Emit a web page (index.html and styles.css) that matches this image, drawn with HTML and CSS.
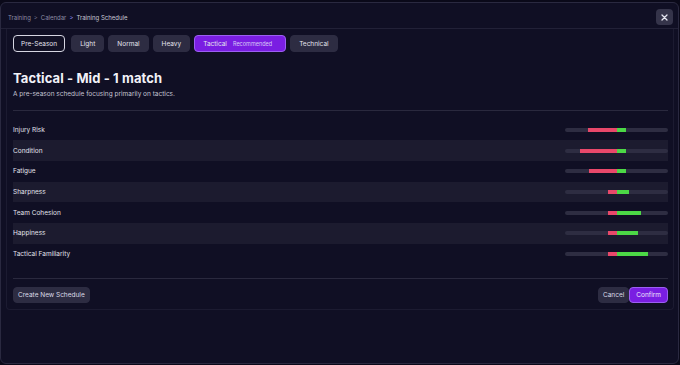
FILE: index.html
```html
<!DOCTYPE html>
<html lang="en">
<head>
  <meta charset="UTF-8">
  <title>Training Schedule</title>
  <link rel="stylesheet" href="styles.css">
</head>
<body>
  <div class="modal">
    <div class="header">
      <div class="crumbs">
        <span>Training</span><span class="sep">&gt;</span><span>Calendar</span><span class="sep last">&gt;</span><span class="current">Training Schedule</span>
      </div>
      <button class="close">
        <svg width="7" height="7" viewBox="0 0 7 7"><path d="M1 1L6 6M6 1L1 6" stroke="#e6e6f0" stroke-width="1.3" stroke-linecap="round"/></svg>
      </button>
    </div>

    <div class="panel">
      <div class="tabs">
        <button class="tab selected">Pre-Season</button>
        <button class="tab">Light</button>
        <button class="tab">Normal</button>
        <button class="tab">Heavy</button>
        <button class="tab recommended">Tactical <span class="tag">Recommended</span></button>
        <button class="tab">Technical</button>
      </div>

      <h1>Tactical - Mid - 1 match</h1>
      <p class="desc">A pre-season schedule focusing primarily on tactics.</p>

      <div class="rows">
        <div class="row"><span>Injury Risk</span><div class="track"><span class="neg" style="margin-left:23px;width:29px"></span><span class="pos" style="width:9px"></span></div></div>
        <div class="row"><span>Condition</span><div class="track"><span class="neg" style="margin-left:15px;width:37px"></span><span class="pos" style="width:9px"></span></div></div>
        <div class="row"><span>Fatigue</span><div class="track"><span class="neg" style="margin-left:24px;width:28px"></span><span class="pos" style="width:9px"></span></div></div>
        <div class="row"><span>Sharpness</span><div class="track"><span class="neg" style="margin-left:43px;width:9px"></span><span class="pos" style="width:12px"></span></div></div>
        <div class="row"><span>Team Cohesion</span><div class="track"><span class="neg" style="margin-left:43px;width:9px"></span><span class="pos" style="width:24px"></span></div></div>
        <div class="row"><span>Happiness</span><div class="track"><span class="neg" style="margin-left:43px;width:9px"></span><span class="pos" style="width:21px"></span></div></div>
        <div class="row"><span>Tactical Familiarity</span><div class="track"><span class="neg" style="margin-left:43px;width:9px"></span><span class="pos" style="width:31px"></span></div></div>
      </div>

      <div class="footer">
        <button class="btn">Create New Schedule</button>
        <div class="actions">
          <button class="btn">Cancel</button>
          <button class="btn primary">Confirm</button>
        </div>
      </div>
    </div>
  </div>
</body>
</html>
```

FILE: styles.css
```css
* { box-sizing: border-box; }
body { margin: 0; background-color: #0a0919; font-family: Inter, "Noto Sans", sans-serif; color: #e8e8f0; }
button { font-family: inherit; cursor: pointer; }

.modal { margin: 2px 1px 0 0; height: 362px; background-color: #100f24; border: 1px solid #2a2940; border-radius: 6px; }

.header { height: 26px; padding: 3px 5px 0 7px; display: flex; align-items: center; justify-content: space-between; border-bottom: 1px solid #222137; }
.crumbs { font-size: 6px; color: #8e8da4; display: flex; align-items: center; gap: 3px; }
.crumbs .sep { color: #6f6e86; }
.crumbs .sep.last { color: #8c8cf0; }
.crumbs .current { color: #c8c8d6; }
.close { width: 17px; height: 16px; border: none; border-radius: 4px; background-color: #35344a; display: flex; align-items: center; justify-content: center; padding: 0; }

.panel { margin: 0 4px 0 5px; padding: 6px 5px 6px 6px; border: 1px solid #1c1b31; border-top: none; border-radius: 0 0 4px 4px; }

.tabs { display: flex; gap: 4px; }
.tab { height: 17px; padding: 0 8px; border: 1px solid #2d2c42; border-radius: 4px; background-color: #2d2c42; color: #e4e4ee; font-size: 6.5px; display: flex; align-items: center; }
.tab.selected { background-color: #121125; border-color: #d6d6e2; margin-right: 2px; padding: 0 7px; }
.tab.recommended { background-color: #7a1ee2; border-color: #9c5ff2; width: 92px; }
.tab .tag { font-size: 5.5px; margin-left: 6px; color: #d8c8f8; }

h1 { margin: 18px 0 0; font-size: 13px; font-weight: 700; color: #f2f2f8; letter-spacing: 0.1px; }
.desc { margin: 4px 0 0; font-size: 6.5px; color: #c4c4d2; }

.rows { margin-top: 12px; border-top: 1px solid #2a293e; padding-top: 8.5px; }
.row { height: 20.7px; display: flex; align-items: center; justify-content: space-between; font-size: 6.5px; color: #e2e2ec; }
.row:nth-child(even) { background-color: #1c1b2f; }
.track { width: 103px; height: 4px; border-radius: 2px; background-color: #2e2d42; display: flex; overflow: hidden; }
.neg { height: 4px; background-color: #e8486a; }
.pos { height: 4px; background-color: #4cd846; }

.footer { margin-top: 13.5px; border-top: 1px solid #2a293e; padding-top: 8px; display: flex; justify-content: space-between; }
.actions { display: flex; gap: 0; }
.btn { height: 16px; padding: 0 4px; border: 1px solid #2d2c42; border-radius: 4px; background-color: #2d2c42; color: #dcdce8; font-size: 6.5px; }
.btn.primary { background-color: #7a1ee2; border-color: #9c5ff2; color: #f0e8ff; padding: 0 6px; }
```
